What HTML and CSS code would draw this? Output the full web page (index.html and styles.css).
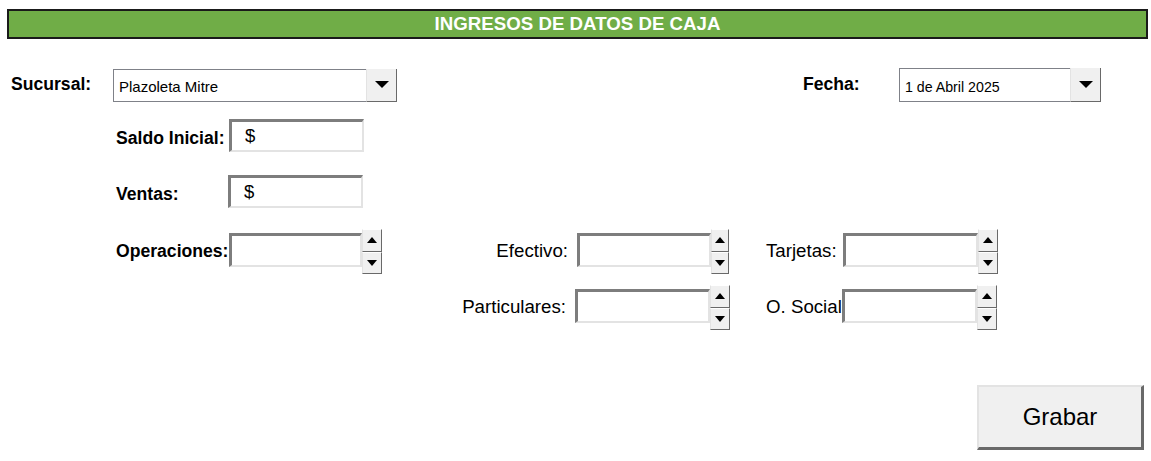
FILE: index.html
```html
<!DOCTYPE html>
<html lang="es">
<head>
  <meta charset="UTF-8">
  <meta name="viewport" content="width=device-width, initial-scale=1.0">
  <title>Ingresos de Datos de Caja</title>
  <link rel="stylesheet" href="styles.css">
</head>
<body>

  <div class="titulo">INGRESOS DE DATOS DE CAJA</div>

  <!-- Sucursal y fecha -->
  <div class="fila-sup">
    <span class="etiqueta etq-sucursal">Sucursal:</span>
    <div class="combo combo-sucursal">
      <span class="combo-texto">Plazoleta Mitre</span>
      <span class="combo-btn">
        <svg width="16" height="9" viewBox="0 0 16 9"><path d="M1 1h14l-7 7z" fill="#000"/></svg>
      </span>
    </div>
    <span class="etiqueta etq-fecha">Fecha:</span>
    <div class="combo combo-fecha">
      <span class="combo-texto fecha-texto">1 de Abril 2025</span>
      <span class="combo-btn">
        <svg width="16" height="9" viewBox="0 0 16 9"><path d="M1 1h14l-7 7z" fill="#000"/></svg>
      </span>
    </div>
  </div>

  <div class="fila fila-saldo">
    <span class="etiqueta etq-saldo">Saldo Inicial:</span>
    <div class="caja">$</div>
  </div>

  <div class="fila fila-ventas">
    <span class="etiqueta etq-ventas">Ventas:</span>
    <div class="caja">$</div>
  </div>

  <!-- Detalle de operaciones -->
  <div class="detalle">
    <div class="campo">
      <span class="etiqueta etq-oper">Operaciones:</span>
      <div class="caja caja-oper"></div>
      <div class="spin">
        <span class="spin-btn"><svg width="10" height="6" viewBox="0 0 10 6"><path d="M0 6h10L5 0z" fill="#000"/></svg></span>
        <span class="spin-btn"><svg width="10" height="6" viewBox="0 0 10 6"><path d="M0 0h10L5 6z" fill="#000"/></svg></span>
      </div>
    </div>
    <div class="campo">
      <span class="etiqueta-n etq-medio">Efectivo:</span>
      <div class="caja caja-medio"></div>
      <div class="spin spin-angosto">
        <span class="spin-btn"><svg width="10" height="6" viewBox="0 0 10 6"><path d="M0 6h10L5 0z" fill="#000"/></svg></span>
        <span class="spin-btn"><svg width="10" height="6" viewBox="0 0 10 6"><path d="M0 0h10L5 6z" fill="#000"/></svg></span>
      </div>
    </div>
    <div class="campo">
      <span class="etiqueta-n etq-der">Tarjetas:</span>
      <div class="caja"></div>
      <div class="spin">
        <span class="spin-btn"><svg width="10" height="6" viewBox="0 0 10 6"><path d="M0 6h10L5 0z" fill="#000"/></svg></span>
        <span class="spin-btn"><svg width="10" height="6" viewBox="0 0 10 6"><path d="M0 0h10L5 6z" fill="#000"/></svg></span>
      </div>
    </div>

    <div class="campo"></div>
    <div class="campo">
      <span class="etiqueta-n etq-medio etq-part">Particulares:</span>
      <div class="caja caja-part"></div>
      <div class="spin">
        <span class="spin-btn"><svg width="10" height="6" viewBox="0 0 10 6"><path d="M0 6h10L5 0z" fill="#000"/></svg></span>
        <span class="spin-btn"><svg width="10" height="6" viewBox="0 0 10 6"><path d="M0 0h10L5 6z" fill="#000"/></svg></span>
      </div>
    </div>
    <div class="campo">
      <span class="etiqueta-n etq-der etq-social">O. Social</span>
      <div class="caja"></div>
      <div class="spin">
        <span class="spin-btn"><svg width="10" height="6" viewBox="0 0 10 6"><path d="M0 6h10L5 0z" fill="#000"/></svg></span>
        <span class="spin-btn"><svg width="10" height="6" viewBox="0 0 10 6"><path d="M0 0h10L5 6z" fill="#000"/></svg></span>
      </div>
    </div>
  </div>

  <div class="fila-boton">
    <button class="btn-grabar">Grabar</button>
  </div>

</body>
</html>
```

FILE: styles.css
```css
body {
  margin: 0;
  background: #fff;
  color: #000;
  font-family: "Liberation Sans", Arial, sans-serif;
}

.titulo {
  margin: 9px 3px 0 7px;
  height: 30px;
  box-sizing: border-box;
  border: 2px solid #1a1a1a;
  background-color: #70ad47;
  color: #fff;
  font-weight: bold;
  font-size: 18.7px;
  line-height: 26px;
  text-align: center;
}

.etiqueta {
  font-weight: bold;
  font-size: 17.6px;
  flex-shrink: 0;
}

.etiqueta-n {
  font-size: 18.7px;
  flex-shrink: 0;
}

/* fila de sucursal y fecha */
.fila-sup {
  display: flex;
  align-items: center;
  margin-top: 29px;
  padding-left: 11px;
  height: 34px;
}

.etq-sucursal { width: 102px; margin-top: -2px; }
.etq-fecha { width: 96px; margin-left: 406px; margin-top: -2px; }

.combo {
  display: flex;
  box-sizing: border-box;
  border: 1px solid #7f8188;
  background: #fff;
}

.combo-sucursal { width: 284px; height: 33px; }
.combo-fecha { width: 202px; height: 34px; }

.combo-texto {
  flex: 1;
  padding-left: 5px;
  font-size: 15px;
  line-height: 33px;
}

.fecha-texto {
  font-size: 14.2px;
  padding-top: 2px;
}

.combo-btn {
  width: 31px;
  box-sizing: border-box;
  display: flex;
  align-items: center;
  justify-content: center;
  background: #f0f0f0;
  border-left: 1px solid #e3e3e3;
  border-right: 1px solid #696969;
  border-bottom: 1px solid #696969;
  margin: -1px -1px -1px 0;
}

/* cajas de texto */
.fila {
  display: flex;
  align-items: center;
  padding-left: 116px;
}

.fila-saldo { margin-top: 17px; }
.fila-ventas { margin-top: 23px; }

.fila .etiqueta { margin-top: 6px; }

.etq-saldo { width: 113px; }
.etq-ventas { width: 112px; }

.caja {
  width: 135px;
  height: 33px;
  box-sizing: border-box;
  border-top: 3px solid #7d7d7d;
  border-left: 3px solid #7d7d7d;
  border-bottom: 2px solid #e3e3e3;
  border-right: 2px solid #e3e3e3;
  background: #fff;
  padding-left: 13px;
  font-size: 18.5px;
  line-height: 27px;
  flex-shrink: 0;
}

/* grilla de operaciones */
.detalle {
  display: grid;
  grid-template-columns: 324px 326px auto;
  grid-template-rows: 46px 45px;
  row-gap: 10px;
  margin-top: 21px;
  padding-left: 116px;
}

.campo {
  display: flex;
  align-items: flex-start;
}

.campo .etiqueta,
.campo .etiqueta-n {
  margin-top: 5px;
  line-height: 34px;
}

.campo .caja {
  margin-top: 4px;
  height: 34px;
}

.etq-oper { width: 113px; }
.caja-oper { width: 133px; }

.etq-medio {
  width: 137px;
  padding-right: 9px;
  box-sizing: border-box;
  text-align: right;
}

.etq-part { width: 135px; }
.caja-medio { width: 134px; }

.etq-der { width: 77px; }
.etq-social { width: 76px; }

.spin {
  display: flex;
  flex-direction: column;
  width: 20px;
  height: 45px;
  flex-shrink: 0;
}

.spin-angosto { width: 18px; }

.spin-btn {
  flex: 1;
  display: flex;
  align-items: center;
  justify-content: center;
  box-sizing: border-box;
  background: #f0f0f0;
  border-top: 1px solid #fff;
  border-left: 1px solid #e3e3e3;
  border-right: 1px solid #696969;
  border-bottom: 1px solid #696969;
}

/* boton grabar */
.fila-boton {
  display: flex;
  justify-content: flex-end;
  margin-top: 55px;
  padding-right: 7px;
}

.btn-grabar {
  width: 167px;
  height: 65px;
  box-sizing: border-box;
  background: #f0f0f0;
  border-top: 2px solid #e3e3e3;
  border-left: 2px solid #e3e3e3;
  border-right: 3px solid #696969;
  border-bottom: 3px solid #696969;
  font-family: "Liberation Sans", Arial, sans-serif;
  font-size: 24px;
  color: #000;
  padding: 0;
  cursor: pointer;
}
```
